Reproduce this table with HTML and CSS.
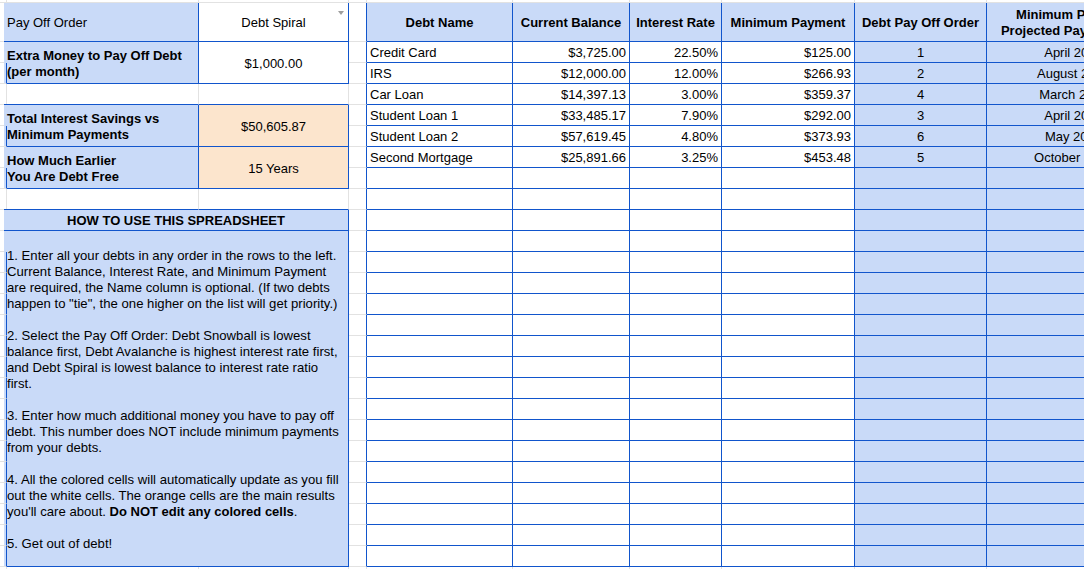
FILE: index.html
```html
<!DOCTYPE html>
<html>
<head>
<meta charset="utf-8">
<title>Debt Payoff</title>
<link rel="stylesheet" href="styles.css">
</head>
<body>
<div class="sheet">
  <!-- row 0: top strip -->
  <div class="c"></div><div class="c"></div><div class="c"></div><div class="c"></div><div class="c"></div><div class="c"></div><div class="c"></div><div class="c"></div><div class="c"></div><div class="c"></div>

  <!-- row 1: headers -->
  <div class="c bR"></div>
  <div class="c bR bB fill">Pay Off Order</div>
  <div class="c bR bB ctr pick">Debt Spiral<span class="arrow"></span></div>
  <div class="c bR"></div>
  <div class="c bR bB fill hd">Debt Name</div>
  <div class="c bR bB fill hd">Current Balance</div>
  <div class="c bR bB fill hd">Interest Rate</div>
  <div class="c bR bB fill hd">Minimum Payment</div>
  <div class="c bR bB fill hd">Debt Pay Off Order</div>
  <div class="c bR bB fill hd two">Minimum Payment<br>Projected Payoff Month</div>

  <!-- row 2 -->
  <div class="c bR"></div>
  <div class="c bR bB fill lbl span2">Extra Money to Pay Off Debt<br>(per month)</div>
  <div class="c bR bB ctr span2">$1,000.00</div>
  <div class="c bR"></div>
  <div class="c bR bB">Credit Card</div>
  <div class="c bR bB num">$3,725.00</div>
  <div class="c bR bB num">22.50%</div>
  <div class="c bR bB num">$125.00</div>
  <div class="c bR bB fill ctr">1</div>
  <div class="c bR bB fill ctr">April 2019</div>

  <!-- row 3 -->
  <div class="c bR"></div>
  <div class="c bR"></div>
  <div class="c bR bB">IRS</div>
  <div class="c bR bB num">$12,000.00</div>
  <div class="c bR bB num">12.00%</div>
  <div class="c bR bB num">$266.93</div>
  <div class="c bR bB fill ctr">2</div>
  <div class="c bR bB fill ctr">August 2020</div>

  <!-- row 4 -->
  <div class="c"></div>
  <div class="c bB"></div>
  <div class="c bB"></div>
  <div class="c bR"></div>
  <div class="c bR bB">Car Loan</div>
  <div class="c bR bB num">$14,397.13</div>
  <div class="c bR bB num">3.00%</div>
  <div class="c bR bB num">$359.37</div>
  <div class="c bR bB fill ctr">4</div>
  <div class="c bR bB fill ctr">March 2021</div>

  <!-- row 5 -->
  <div class="c bR"></div>
  <div class="c bR bB fill lbl span2">Total Interest Savings vs<br>Minimum Payments</div>
  <div class="c bR bB warm ctr span2">$50,605.87</div>
  <div class="c bR"></div>
  <div class="c bR bB">Student Loan 1</div>
  <div class="c bR bB num">$33,485.17</div>
  <div class="c bR bB num">7.90%</div>
  <div class="c bR bB num">$292.00</div>
  <div class="c bR bB fill ctr">3</div>
  <div class="c bR bB fill ctr">April 2031</div>

  <!-- row 6 -->
  <div class="c bR"></div>
  <div class="c bR"></div>
  <div class="c bR bB">Student Loan 2</div>
  <div class="c bR bB num">$57,619.45</div>
  <div class="c bR bB num">4.80%</div>
  <div class="c bR bB num">$373.93</div>
  <div class="c bR bB fill ctr">6</div>
  <div class="c bR bB fill ctr">May 2027</div>

  <!-- row 7 -->
  <div class="c bR"></div>
  <div class="c bR bB fill lbl span2">How Much Earlier<br>You Are Debt Free</div>
  <div class="c bR bB warm ctr span2">15 Years</div>
  <div class="c bR"></div>
  <div class="c bR bB">Second Mortgage</div>
  <div class="c bR bB num">$25,891.66</div>
  <div class="c bR bB num">3.25%</div>
  <div class="c bR bB num">$453.48</div>
  <div class="c bR bB fill ctr">5</div>
  <div class="c bR bB fill ctr">October 2026</div>

  <!-- row 8 -->
  <div class="c bR"></div>
  <div class="c bR"></div>
  <div class="c bR bB"></div><div class="c bR bB"></div><div class="c bR bB"></div><div class="c bR bB"></div><div class="c bR bB fill"></div><div class="c bR bB fill"></div>

  <!-- row 9 -->
  <div class="c"></div>
  <div class="c bB"></div>
  <div class="c bB"></div>
  <div class="c bR"></div>
  <div class="c bR bB"></div><div class="c bR bB"></div><div class="c bR bB"></div><div class="c bR bB"></div><div class="c bR bB fill"></div><div class="c bR bB fill"></div>

  <!-- row 10 -->
  <div class="c bR"></div>
  <div class="c bR bB fill hd wide">HOW TO USE THIS SPREADSHEET</div>
  <div class="c bR"></div>
  <div class="c bR bB"></div><div class="c bR bB"></div><div class="c bR bB"></div><div class="c bR bB"></div><div class="c bR bB fill"></div><div class="c bR bB fill"></div>

  <!-- row 11 -->
  <div class="c bR"></div>
  <div class="c bR bB fill guide">
    <p>1. Enter all your debts in any order in the rows to the left.<br>Current Balance, Interest Rate, and Minimum Payment<br>are required, the Name column is optional. (If two debts<br>happen to "tie", the one higher on the list will get priority.)</p>
    <p>2. Select the Pay Off Order: Debt Snowball is lowest<br>balance first, Debt Avalanche is highest interest rate first,<br>and Debt Spiral is lowest balance to interest rate ratio<br>first.</p>
    <p>3. Enter how much additional money you have to pay off<br>debt. This number does NOT include minimum payments<br>from your debts.</p>
    <p>4. All the colored cells will automatically update as you fill<br>out the white cells. The orange cells are the main results<br>you'll care about. <b>Do NOT edit any colored cells</b>.</p>
    <p>5. Get out of debt!</p>
  </div>
  <div class="c bR"></div>
  <div class="c bR bB"></div><div class="c bR bB"></div><div class="c bR bB"></div><div class="c bR bB"></div><div class="c bR bB fill"></div><div class="c bR bB fill"></div>

  <!-- rows 12-26 -->
  <div class="c bR"></div><div class="c bR"></div><div class="c bR bB"></div><div class="c bR bB"></div><div class="c bR bB"></div><div class="c bR bB"></div><div class="c bR bB fill"></div><div class="c bR bB fill"></div>
  <div class="c bR"></div><div class="c bR"></div><div class="c bR bB"></div><div class="c bR bB"></div><div class="c bR bB"></div><div class="c bR bB"></div><div class="c bR bB fill"></div><div class="c bR bB fill"></div>
  <div class="c bR"></div><div class="c bR"></div><div class="c bR bB"></div><div class="c bR bB"></div><div class="c bR bB"></div><div class="c bR bB"></div><div class="c bR bB fill"></div><div class="c bR bB fill"></div>
  <div class="c bR"></div><div class="c bR"></div><div class="c bR bB"></div><div class="c bR bB"></div><div class="c bR bB"></div><div class="c bR bB"></div><div class="c bR bB fill"></div><div class="c bR bB fill"></div>
  <div class="c bR"></div><div class="c bR"></div><div class="c bR bB"></div><div class="c bR bB"></div><div class="c bR bB"></div><div class="c bR bB"></div><div class="c bR bB fill"></div><div class="c bR bB fill"></div>
  <div class="c bR"></div><div class="c bR"></div><div class="c bR bB"></div><div class="c bR bB"></div><div class="c bR bB"></div><div class="c bR bB"></div><div class="c bR bB fill"></div><div class="c bR bB fill"></div>
  <div class="c bR"></div><div class="c bR"></div><div class="c bR bB"></div><div class="c bR bB"></div><div class="c bR bB"></div><div class="c bR bB"></div><div class="c bR bB fill"></div><div class="c bR bB fill"></div>
  <div class="c bR"></div><div class="c bR"></div><div class="c bR bB"></div><div class="c bR bB"></div><div class="c bR bB"></div><div class="c bR bB"></div><div class="c bR bB fill"></div><div class="c bR bB fill"></div>
  <div class="c bR"></div><div class="c bR"></div><div class="c bR bB"></div><div class="c bR bB"></div><div class="c bR bB"></div><div class="c bR bB"></div><div class="c bR bB fill"></div><div class="c bR bB fill"></div>
  <div class="c bR"></div><div class="c bR"></div><div class="c bR bB"></div><div class="c bR bB"></div><div class="c bR bB"></div><div class="c bR bB"></div><div class="c bR bB fill"></div><div class="c bR bB fill"></div>
  <div class="c bR"></div><div class="c bR"></div><div class="c bR bB"></div><div class="c bR bB"></div><div class="c bR bB"></div><div class="c bR bB"></div><div class="c bR bB fill"></div><div class="c bR bB fill"></div>
  <div class="c bR"></div><div class="c bR"></div><div class="c bR bB"></div><div class="c bR bB"></div><div class="c bR bB"></div><div class="c bR bB"></div><div class="c bR bB fill"></div><div class="c bR bB fill"></div>
  <div class="c bR"></div><div class="c bR"></div><div class="c bR bB"></div><div class="c bR bB"></div><div class="c bR bB"></div><div class="c bR bB"></div><div class="c bR bB fill"></div><div class="c bR bB fill"></div>
  <div class="c bR"></div><div class="c bR"></div><div class="c bR bB"></div><div class="c bR bB"></div><div class="c bR bB"></div><div class="c bR bB"></div><div class="c bR bB fill"></div><div class="c bR bB fill"></div>
  <div class="c bR"></div><div class="c bR"></div><div class="c bR bB"></div><div class="c bR bB"></div><div class="c bR bB"></div><div class="c bR bB"></div><div class="c bR bB fill"></div><div class="c bR bB fill"></div>

  <!-- row 27 -->
  <div class="c"></div><div class="c"></div><div class="c"></div><div class="c"></div><div class="c"></div><div class="c"></div><div class="c"></div><div class="c"></div><div class="c"></div><div class="c"></div>
</div>
</body>
</html>
```

FILE: styles.css
```css
html, body {
  margin: 0;
  padding: 0;
  background: #ffffff;
  overflow: hidden;
}

body {
  width: 1084px;
  height: 569px;
  font-family: "Liberation Sans", Arial, sans-serif;
  font-size: 13px;
  color: #000000;
}

.sheet {
  display: grid;
  grid-template-columns: 4px 195px 150px 18px 146px 117px 92px 133px 132px 174px;
  grid-template-rows: 3px 39px repeat(26, 21px);
}

.c {
  box-sizing: border-box;
  border-right: 1px solid #e2e2e2;
  border-bottom: 1px solid #e2e2e2;
  display: flex;
  align-items: center;
  padding: 2px 3px 0 3px;
  white-space: nowrap;
  overflow: hidden;
  line-height: 16px;
  min-width: 0;
}

.bR { border-right-color: #1155cc; }
.bB { border-bottom-color: #1155cc; }

.fill { background: #c9daf8; }
.warm { background: #fce5cd; }

.span2 { grid-row: span 2; }
.wide { grid-column: span 2; }

.ctr {
  justify-content: center;
  text-align: center;
}

.num { justify-content: flex-end; }

.hd {
  font-weight: bold;
  justify-content: center;
  text-align: center;
}

.lbl { font-weight: bold; }

.pick { position: relative; }

.arrow {
  position: absolute;
  right: 4px;
  top: 8px;
  width: 0;
  height: 0;
  border-left: 3px solid transparent;
  border-right: 3px solid transparent;
  border-top: 4px solid #9e9e9e;
}

.guide {
  grid-column: span 2;
  grid-row: span 16;
  display: block;
  padding: 1px 3px 0 3px;
  white-space: nowrap;
  font-size: 13.15px;
}

.guide p {
  margin: 16px 0 0 0;
  line-height: 16px;
}

.guide b { font-size: 13px; }
```
